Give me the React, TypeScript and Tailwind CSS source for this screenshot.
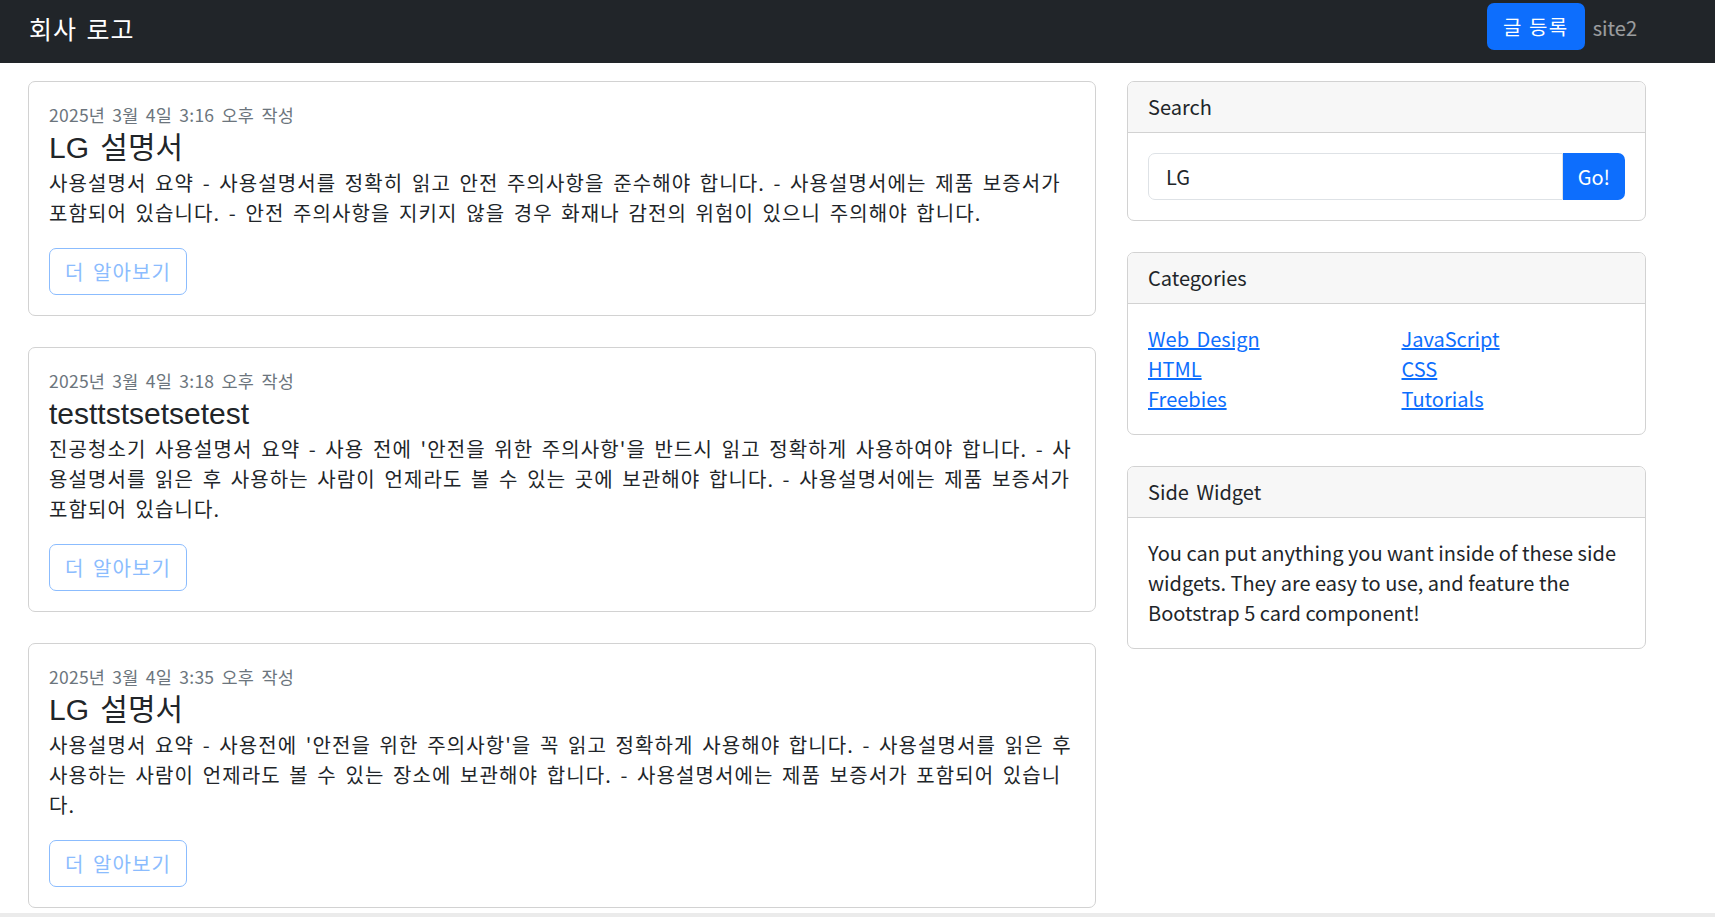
const posts = [
  {
    date: "2025년 3월 4일 3:16 오후 작성",
    title: "LG 설명서",
    body: "사용설명서 요약 - 사용설명서를 정확히 읽고 안전 주의사항을 준수해야 합니다. - 사용설명서에는 제품 보증서가 포함되어 있습니다. - 안전 주의사항을 지키지 않을 경우 화재나 감전의 위험이 있으니 주의해야 합니다.",
  },
  {
    date: "2025년 3월 4일 3:18 오후 작성",
    title: "testtstsetsetest",
    body: "진공청소기 사용설명서 요약 - 사용 전에 '안전을 위한 주의사항'을 반드시 읽고 정확하게 사용하여야 합니다. - 사용설명서를 읽은 후 사용하는 사람이 언제라도 볼 수 있는 곳에 보관해야 합니다. - 사용설명서에는 제품 보증서가 포함되어 있습니다.",
  },
  {
    date: "2025년 3월 4일 3:35 오후 작성",
    title: "LG 설명서",
    body: "사용설명서 요약 - 사용전에 '안전을 위한 주의사항'을 꼭 읽고 정확하게 사용해야 합니다. - 사용설명서를 읽은 후 사용하는 사람이 언제라도 볼 수 있는 장소에 보관해야 합니다. - 사용설명서에는 제품 보증서가 포함되어 있습니다.",
  },
];

const categories = [
  ["Web Design", "JavaScript"],
  ["HTML", "CSS"],
  ["Freebies", "Tutorials"],
];

function SideCard({ title, children }: { title: string; children: React.ReactNode }) {
  return (
    <div className="mb-[31px] rounded-[7px] border border-[#d2d2d2] overflow-hidden">
      <div className="bg-[#f7f7f7] border-b border-[#d2d2d2] px-[20px] py-[10px] text-[20px] leading-[30px]">
        {title}
      </div>
      <div className="p-[20px]">{children}</div>
    </div>
  );
}

export default function App() {
  return (
    <div className="min-h-screen bg-white text-[#212529] [font-family:'Noto_Sans_CJK_KR','Noto_Sans',sans-serif] [word-spacing:3px]">
      {/* Navbar */}
      <nav className="h-[63px] bg-[#212529] flex items-start justify-between pl-[29px] pr-[78px]">
        <a href="#" className="mt-[10px] text-[25px] leading-[37px] tracking-[1px] text-white">
          회사 로고
        </a>
        <div className="flex items-start gap-[8px] mt-[3px]">
          <button className="h-[47px] rounded-[7px] bg-[#0d6efd] px-[16px] text-[20px] leading-[30px] tracking-[1.5px] text-white">
            글 등록
          </button>
          <a href="#" className="mt-[10px] text-[20px] leading-[30px] text-white/55">
            site2
          </a>
        </div>
      </nav>

      {/* Content */}
      <div className="flex items-start gap-[31px] pl-[28px] pt-[18px]">
        {/* Posts */}
        <div className="w-[1068px] shrink-0">
          {posts.map((p, i) => (
            <div
              key={i}
              className={`rounded-[7px] border border-[#d2d2d2] p-[20px] ${i < posts.length - 1 ? "mb-[31px]" : ""}`}
            >
              <div className="text-[17.5px] leading-[26px] tracking-[0.25px] text-[#6c757d]">{p.date}</div>
              <h2 className="pt-[2px] mb-[2px] text-[30px] leading-[36px] font-normal [font-family:'Liberation_Sans','Noto_Sans_CJK_KR',sans-serif]">
                {p.title}
              </h2>
              <p className="mb-[20px] text-[20px] leading-[30px] tracking-[1.1px]">{p.body}</p>
              <a
                href="#"
                className="inline-block rounded-[7px] border border-[#8bbcfe] px-[15px] py-[7.5px] text-[20px] leading-[30px] tracking-[1.1px] text-[#8bbcfe]"
              >
                더 알아보기
              </a>
            </div>
          ))}
        </div>

        {/* Sidebar */}
        <div className="w-[519px] shrink-0">
          <SideCard title="Search">
            <div className="flex h-[47px]">
              <input
                defaultValue="LG"
                className="min-w-0 flex-1 rounded-l-[7px] border border-[#dee2e6] pl-[17px] pr-[15px] text-[20px] text-[#212529] outline-none"
              />
              <button className="rounded-r-[7px] bg-[#0d6efd] px-[15px] text-[20px] leading-[30px] text-white">
                Go!
              </button>
            </div>
          </SideCard>

          <SideCard title="Categories">
            <div className="grid grid-cols-2 gap-x-[30px]">
              {categories.map(([a, b]) => (
                <div key={a} className="contents">
                  <a href="#" className="text-[20px] leading-[30px] text-[#0d6efd] underline">
                    {a}
                  </a>
                  <a href="#" className="text-[20px] leading-[30px] text-[#0d6efd] underline">
                    {b}
                  </a>
                </div>
              ))}
            </div>
          </SideCard>

          <SideCard title="Side Widget">
            <p className="text-[20px] leading-[30px] [word-spacing:0px]">
              You can put anything you want inside of these side widgets. They are easy to use, and feature the
              Bootstrap 5 card component!
            </p>
          </SideCard>
        </div>
      </div>

      <div className="mt-[5px] h-[40px] bg-[#ebebeb]" />
    </div>
  );
}
